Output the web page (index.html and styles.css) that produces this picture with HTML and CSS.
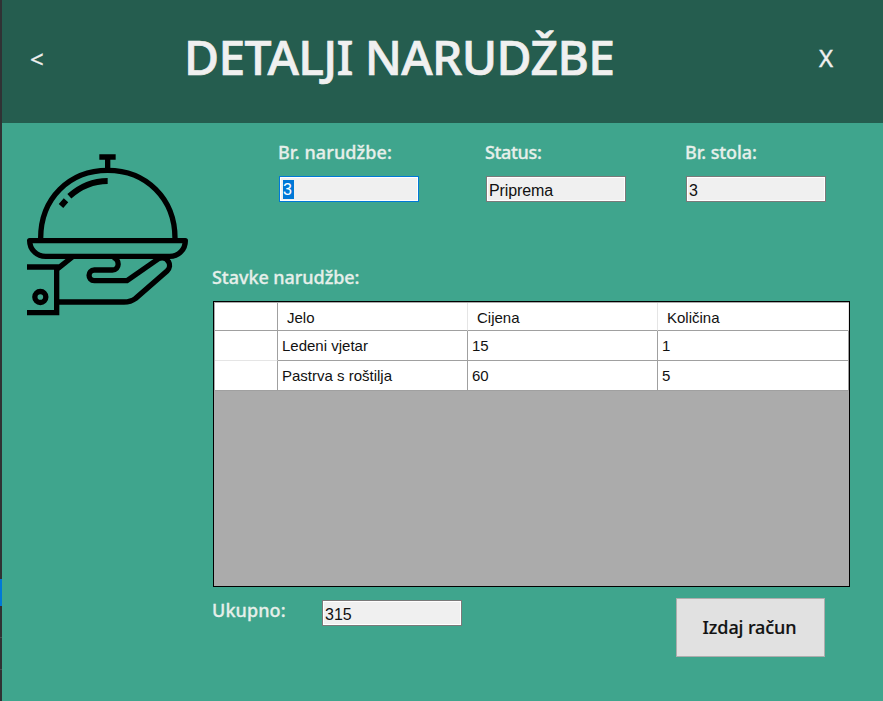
FILE: index.html
```html
<!DOCTYPE html>
<html lang="hr">
<head>
<meta charset="utf-8">
<title>Detalji narudžbe</title>
<link rel="stylesheet" href="styles.css">
</head>
<body>
<div class="edge"><span class="edge-top"></span><span class="edge-selected"></span><span class="edge-row"></span><span class="edge-row"></span></div>
<div class="window">
  <header class="header">
    <span class="back">&lt;</span>
    <h1 class="title">DETALJI NARUDŽBE</h1>
    <span class="close">X</span>
  </header>
  <main class="main">
    <svg class="logo" viewBox="0 0 555 540" fill="none" stroke="#000" stroke-width="16">
      <path d="M253 36H302M278 36V72" />
      <path d="M77 280C77 160 163 76 278 76S480 160 480 280" />
      <path d="M278 108C234 108 194 126 163 154M153 166L138 183" stroke-width="18" />
      <path d="M44 287H511C511 311 493 334 464 334H92C63 334 44 311 44 287Z" stroke-linejoin="round" />
      <path d="M36 366H125V503H36M128 371L172 336" />
      <circle cx="76" cy="456" r="16.500" />
      <path d="M294 337C315 342 315 375 292 375H238C217 375 217 407 238 407H336L432 340C458 332 474 361 456 378L362 460Q347 471 327 471H130" />
    </svg>
    <section class="content">
      <div class="fields">
        <label class="field"><span class="label l-order">Br. narudžbe:</span><span class="box focused"><mark class="selection">3</mark></span></label>
        <label class="field"><span class="label l-status">Status:</span><span class="box"><span class="value v-status">Priprema</span></span></label>
        <label class="field"><span class="label l-table">Br. stola:</span><span class="box"><span class="value">3</span></span></label>
      </div>
      <div class="label l-items">Stavke narudžbe:</div>
      <div class="grid">
        <div class="row head"><span></span><span>Jelo</span><span>Cijena</span><span>Količina</span></div>
        <div class="row"><span></span><span>Ledeni vjetar</span><span>15</span><span>1</span></div>
        <div class="row"><span></span><span>Pastrva s roštilja</span><span>60</span><span>5</span></div>
      </div>
      <div class="footer">
        <span class="label l-total">Ukupno:</span>
        <span class="box"><span class="value">315</span></span>
        <button class="button">Izdaj račun</button>
      </div>
    </section>
  </main>
</div>
</body>
</html>
```

FILE: styles.css
```css
* { box-sizing: border-box; }
body {
  margin: 0;
  width: 883px;
  height: 701px;
  display: flex;
  overflow: hidden;
  background: #3fa58d;
  font-family: "Noto Sans", "Open Sans", sans-serif;
}
.edge { width: 2px; background: #303234; display: flex; flex-direction: column; flex: none; }
.edge-top { height: 579px; }
.edge-selected { height: 27px; background: #0078d7; }
.edge-row { height: 32px; border-bottom: 1px solid #4b4d4f; }
.window { flex: 1; }
.header {
  height: 123px;
  background: #255d4f;
  color: #f0f0f0;
  display: flex;
  white-space: nowrap;
}
.back { width: 182px; padding-left: 28px; padding-top: 42px; font-size: 24px; line-height: 33px; -webkit-text-stroke: 0.3px; }
.title { margin: 0; width: 635px; padding-top: 24px; font-size: 48px; line-height: 66px; font-weight: 500; letter-spacing: -0.65px; -webkit-text-stroke: 0.7px; }
.close { font-size: 24px; line-height: 33px; padding-top: 41px; -webkit-text-stroke: 0.4px; }
.main { display: flex; }
.logo { width: 185px; height: 180px; margin: 22px 13px 0; flex: none; }
.content { width: 637px; }
.fields { display: flex; padding: 17px 0 0 66px; height: 141px; }
.field { display: block; width: 207px; flex: none; }
.field:nth-child(2) { width: 200px; }
.field:nth-child(3) { width: 140px; }
.label {
  display: block;
  height: 26px;
  font-size: 18px;
  line-height: 26px;
  font-weight: 500;
  color: #e6efea;
  white-space: nowrap;
  text-indent: -1px;
  -webkit-text-stroke: 0.3px;
}
.fields .label { line-height: 25px; }
.l-order { letter-spacing: 0.1px; }
.l-status { letter-spacing: -0.35px; }
.l-table { letter-spacing: -0.1px; }
.l-items { letter-spacing: -0.05px; }
.l-total { letter-spacing: 0.1px; }
.box {
  display: flex;
  align-items: center;
  width: 140px;
  height: 26px;
  padding: 3px 0 0 2px;
  border: 1px solid #7a7a7a;
  box-shadow: inset 0 0 0 1px #fff;
  background: #f0f0f0;
  color: #111;
  font: 16px/19px "Liberation Sans", sans-serif;
}
.field .box { margin-top: 10px; }
.focused { border-color: #0078d7; }
.selection { background: #0078d7; color: #fff; height: 19px; width: 11px; margin: -2px 0 0 1px; }
.value { padding-left: 0; }
.v-status { letter-spacing: -0.1px; }
.grid { height: 286px; margin-top: 11px; border: 1px solid #000; background: #ababab; padding: 1px 0 0 1px; }
.row {
  display: grid;
  grid-template-columns: 63px 190px 190px 191px;
  width: 634px;
  height: 30px;
  background: #fff;
  color: #111;
  font: 15px/28px "Liberation Sans", sans-serif;
}
.row span { border-right: 1px solid #a0a0a0; border-bottom: 1px solid #a0a0a0; padding: 1px 0 0 4px; }
.row span:first-child { border-bottom-color: #e5e5e5; }
.row:last-child span:first-child { border-bottom-color: #a0a0a0; }
.head { height: 28px; line-height: 25px; }
.row.head span { border-right-color: #e5e5e5; padding: 2px 0 0 9px; }
.row.head span:first-child { border-color: #a0a0a0; }
.footer { display: flex; padding-top: 11px; }
.footer .label { width: 109px; line-height: 25px; }
.footer .box { margin-top: 2px; }
.button {
  width: 149px;
  height: 59px;
  margin: 0 0 0 214px;
  padding: 0 2px 1px 0;
  border: 1px solid #adadad;
  background: #e1e1e1;
  color: #111;
  font: 500 18px/26px "Noto Sans", "Open Sans", sans-serif;
  letter-spacing: -0.1px;
  -webkit-text-stroke: 0.2px;
}
```
